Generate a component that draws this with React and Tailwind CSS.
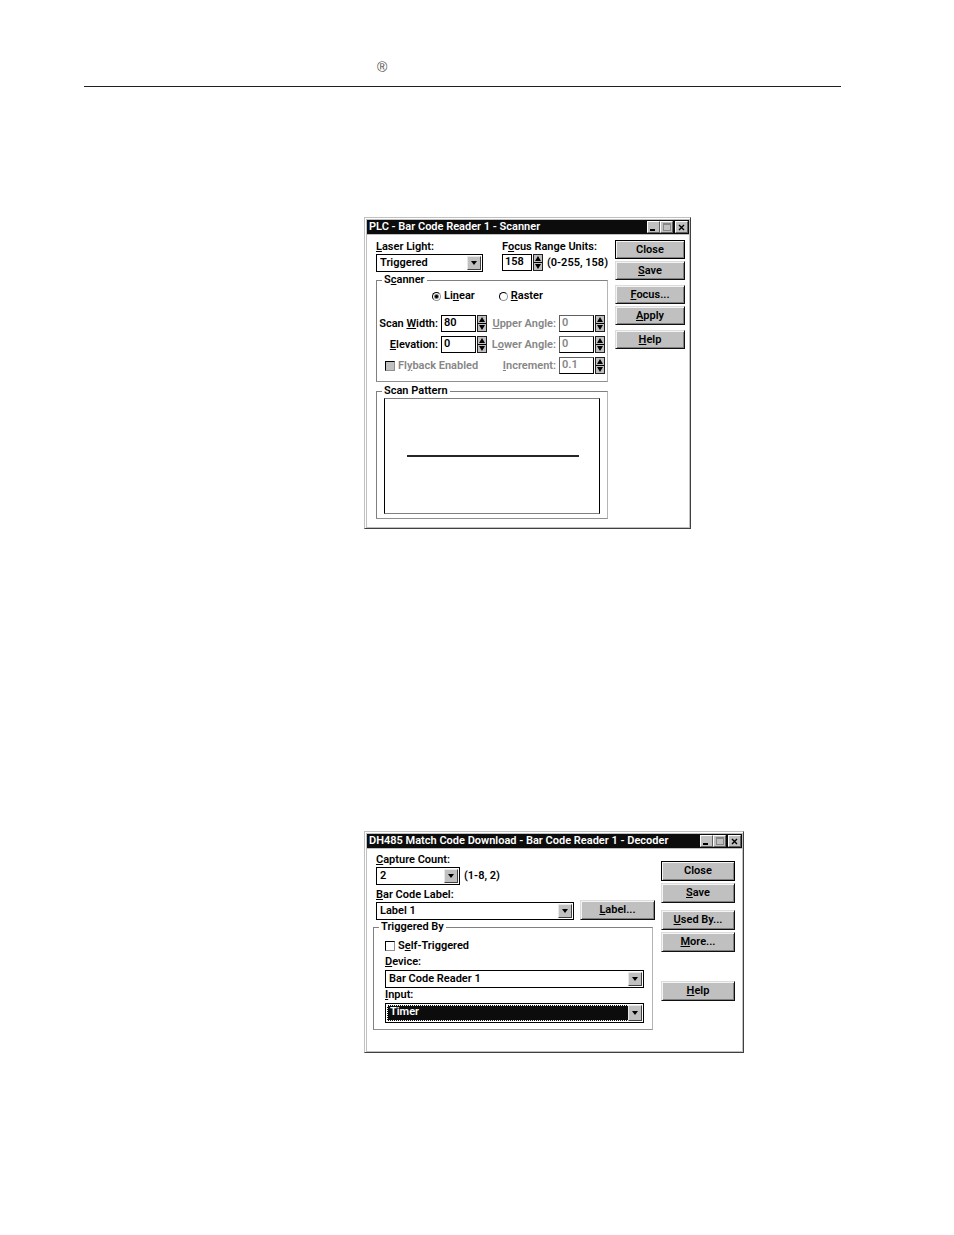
import React, { useId, useState } from "react";
import clsx from "clsx";

// Renders text with the character after "&" underlined as its access key.
function Mnemonic({ text }) {
  const i = text.indexOf("&");
  if (i < 0) return text;
  return (
    <>
      {text.slice(0, i)}
      <u className="underline underline-offset-1">{text[i + 1]}</u>
      {text.slice(i + 2)}
    </>
  );
}

function TitleButton({ label, dim, className, children }) {
  return (
    <button
      type="button"
      aria-label={label}
      className={clsx("flex h-3 w-[13px] items-center justify-center border border-t-white border-l-white border-r-[#606060] border-b-[#606060] bg-[#c0c0c0]", dim ? "text-[#868686]" : "text-black", className)}
    >
      <svg width="9" height="9" viewBox="0 0 9 9" fill="none" stroke="currentColor" shapeRendering="crispEdges">
        {children}
      </svg>
    </button>
  );
}

function Window({ title, className, children }) {
  return (
    <section aria-label={title} className={clsx("max-w-full border border-t-[#c0c0c0] border-l-[#c0c0c0] border-r-[#404040] border-b-[#404040] bg-white", className)}>
      <div className="h-full border-t border-l border-white">
        <div className="h-full border border-[#c0c0c0]">
          <header className="flex h-[15px] items-center border-b border-[#c0c0c0] bg-[#0c0c0c] pr-px pl-[2px] text-white">
            <h2 className="flex-1 whitespace-nowrap">{title}</h2>
            <TitleButton label="Minimize">
              <path d="M1 7h5" strokeWidth="2" />
            </TitleButton>
            <TitleButton label="Maximize" dim>
              <path d="M1.5 0.5h7v7h-7zM1 1.5h8" />
            </TitleButton>
            <TitleButton label="Close window" className="ml-[2px]">
              <path d="M2 2l5 5M7 2l-5 5" strokeWidth="1.4" shapeRendering="auto" />
            </TitleButton>
          </header>
          {children}
        </div>
      </div>
    </section>
  );
}

function PushButton({ text, primary, className }) {
  return (
    <button
      type="button"
      className={clsx(
        "border bg-[#c0c0c0] text-center shadow-[inset_1px_1px_0_#f4f4f4,inset_-1px_-1px_0_#808080]",
        primary ? "border-black" : "border-t-[#dcdcdc] border-l-[#dcdcdc] border-r-[#101010] border-b-[#101010]",
        className
      )}
    >
      <Mnemonic text={text} />
    </button>
  );
}

function Combo({ id, value, highlighted, className }) {
  return (
    <div className={clsx("relative border border-black p-px", className)}>
      <select
        id={id}
        defaultValue={value}
        className={clsx(
          "block h-full w-full appearance-none rounded-none pr-4 outline-none",
          highlighted ? "border border-dotted border-white bg-[#0c0c0c] pb-[2px] pl-[2px] text-white" : "bg-white pl-[2px]"
        )}
      >
        <option>{value}</option>
      </select>
      <span className="pointer-events-none absolute inset-y-px right-px flex w-[14px] items-center justify-center border border-t-[#e8e8e8] border-l-[#e8e8e8] border-r-[#404040] border-b-[#404040] bg-[#c0c0c0]">
        <svg width="6" height="4" viewBox="0 0 6 4" aria-hidden="true">
          <path d="M0 0h6L3 4z" />
        </svg>
      </span>
    </div>
  );
}

function SpinBox({ id, value, disabled, className }) {
  const [current, setCurrent] = useState(value);
  const step = (d) => setCurrent((v) => String(Number(v) + d));
  const arrow = "flex min-h-0 flex-1 items-center justify-center";
  return (
    <div className={clsx("flex h-[17px] gap-px", className)}>
      <input
        id={id}
        value={current}
        disabled={disabled}
        onChange={(e) => setCurrent(e.target.value)}
        className={clsx("w-0 min-w-0 flex-1 border border-black bg-white pb-[2px] pl-[2px] outline-none", disabled && "border-t-[#606060] border-l-[#606060] text-[#868686]")}
      />
      <div className="flex w-[10px] flex-col divide-y divide-black border border-[#202020] bg-[#c0c0c0]">
        <button type="button" aria-label="Increase" disabled={disabled} onClick={() => step(1)} className={arrow}>
          <svg width="6" height="5" viewBox="0 0 6 5"><path d="M3 0L6 5H0z" /></svg>
        </button>
        <button type="button" aria-label="Decrease" disabled={disabled} onClick={() => step(-1)} className={arrow}>
          <svg width="6" height="5" viewBox="0 0 6 5"><path d="M0 0h6L3 5z" /></svg>
        </button>
      </div>
    </div>
  );
}

function SpinField({ text, value, disabled }) {
  const id = useId();
  return (
    <>
      <label htmlFor={id} className={clsx("text-right whitespace-nowrap", disabled && "text-[#868686]")}>
        <Mnemonic text={text} />
      </label>
      <SpinBox id={id} value={value} disabled={disabled} />
    </>
  );
}

function Radio({ text, checked }) {
  return (
    <label className="flex items-center gap-[3px]">
      <input
        type="radio"
        name="mode"
        defaultChecked={checked}
        className="size-[9px] appearance-none rounded-full border border-t-black border-l-black border-r-[#909090] border-b-[#909090] checked:bg-[radial-gradient(circle,#000_1px,#fff_3px)]"
      />
      <span><Mnemonic text={text} /></span>
    </label>
  );
}

function Group({ title, className, children }) {
  return (
    <fieldset className="min-w-0 border border-t-[#808080] border-l-[#808080] border-r-[#b4b4b4] border-b-[#909090]">
      <legend className="ml-[5px] h-3 px-[2px]"><Mnemonic text={title} /></legend>
      <div className={className}>{children}</div>
    </fieldset>
  );
}

function ScannerWindow() {
  return (
    <Window title="PLC - Bar Code Reader 1 - Scanner" className="w-[327px]">
      <div className="flex pr-1 pb-2 pl-[9px]">
        <div className="flex min-w-0 flex-1 flex-col pt-[6px]">
          <div className="mb-[2px] flex justify-between">
            <div className="w-[107px]">
              <label htmlFor="laser" className="block"><Mnemonic text="&Laser Light:" /></label>
              <Combo id="laser" value="Triggered" className="mt-px h-[18px]" />
            </div>
            <div className="w-[106px]">
              <label htmlFor="focus" className="block whitespace-nowrap"><Mnemonic text="F&ocus Range Units:" /></label>
              <div className="mt-px flex items-center gap-1">
                <SpinBox id="focus" value="158" className="w-[41px]" />
                <span className="whitespace-nowrap">(0-255, 158)</span>
              </div>
            </div>
          </div>

          <Group title="S&canner" className="pt-1 pr-[2px] pb-[7px]">
            <div className="flex gap-6 pl-[55px]">
              <Radio text="Li&near" checked />
              <Radio text="&Raster" />
            </div>
            <div className="mt-[13px] grid grid-cols-[61px_46px_1fr_46px] items-center gap-x-[3px] gap-y-1">
              <SpinField text="Scan &Width:" value="80" />
              <SpinField text="&Upper Angle:" value="0" disabled />
              <SpinField text="&Elevation:" value="0" />
              <SpinField text="L&ower Angle:" value="0" disabled />
              <label className="col-span-2 flex items-center gap-[3px] pl-2 whitespace-nowrap text-[#868686]">
                <input type="checkbox" disabled className="size-[10px] appearance-none border border-t-black border-l-black border-r-[#909090] border-b-[#909090] bg-[#c0c0c0]" />
                <span><Mnemonic text="Fl&yback Enabled" /></span>
              </label>
              <SpinField text="&Increment:" value="0.1" disabled />
            </div>
          </Group>

          <div className="mt-[3px]">
            <Group title="Scan Pattern" className="px-[7px] pt-px pb-1">
              <div className="border border-x-black border-y-[#808080]">
                <svg viewBox="0 0 214 114" role="img" aria-label="Scan pattern" className="block h-[114px] w-full">
                  <path d="M22 57h172" stroke="#262626" strokeWidth="2" />
                </svg>
              </div>
            </Group>
          </div>
        </div>

        <div className="ml-[7px] flex w-[70px] flex-col pt-[5px]">
          <PushButton text="Close" primary className="h-[19px]" />
          <PushButton text="&Save" className="mt-[2px] h-[19px]" />
          <PushButton text="&Focus..." className="mt-[5px] h-[19px]" />
          <PushButton text="&Apply" className="mt-[2px] h-[19px]" />
          <PushButton text="&Help" className="mt-[5px] h-[19px]" />
        </div>
      </div>
    </Window>
  );
}

function DecoderWindow() {
  return (
    <Window title="DH485 Match Code Download - Bar Code Reader 1 - Decoder" className="w-[380px]">
      <div className="flex pr-[7px] pb-[21px] pl-[6px]">
        <div className="flex min-w-0 flex-1 flex-col pt-[5px]">
          <label htmlFor="count" className="ml-[3px]"><Mnemonic text="&Capture Count:" /></label>
          <div className="mt-px ml-[3px] flex items-center gap-1">
            <Combo id="count" value="2" className="h-[18px] w-[84px]" />
            <span>(1-8, 2)</span>
          </div>
          <div className="mt-1 ml-[3px] flex items-end gap-[6px]">
            <div className="flex-1">
              <label htmlFor="barcode" className="block"><Mnemonic text="&Bar Code Label:" /></label>
              <Combo id="barcode" value="Label 1" className="mt-px h-[18px]" />
            </div>
            <PushButton text="&Label..." className="h-5 w-[75px]" />
          </div>

          <div className="mt-px mr-[2px]">
            <Group title="Triggered By" className="px-[11px] pt-[7px] pb-[6px]">
              <label className="flex items-center gap-[3px]">
                <input type="checkbox" className="size-[10px] appearance-none border border-t-black border-l-black border-r-[#909090] border-b-[#909090] bg-white checked:bg-black" />
                <span><Mnemonic text="S&elf-Triggered" /></span>
              </label>
              <label htmlFor="device" className="mt-1 block"><Mnemonic text="&Device:" /></label>
              <Combo id="device" value="Bar Code Reader 1" className="mt-[2px] mr-[-3px] h-[18px]" />
              <label htmlFor="input" className="mt-px block"><Mnemonic text="&Input:" /></label>
              <Combo id="input" value="Timer" highlighted className="mt-[2px] mr-[-3px] h-5" />
            </Group>
          </div>
        </div>

        <div className="ml-[6px] flex w-[74px] flex-col pt-3">
          <PushButton text="Close" primary className="h-5" />
          <PushButton text="&Save" className="mt-[2px] h-5" />
          <PushButton text="&Used By..." className="mt-[7px] h-5" />
          <PushButton text="&More..." className="mt-[2px] h-5" />
          <PushButton text="&Help" className="mt-[29px] h-5" />
        </div>
      </div>
    </Window>
  );
}

export default function App() {
  return (
    <div className="min-h-screen bg-white pb-10 font-['Roboto',sans-serif] text-[11px] leading-3 font-semibold text-black">
      <header className="mr-[113px] ml-[84px] border-b border-[#202020] pt-[60px] pb-[12px] pl-[293px] font-['Liberation_Sans',sans-serif] text-[14px] leading-[14px] font-normal text-[#505050]">
        ®
      </header>
      <main className="mt-[130px] ml-[364px] flex flex-col gap-[302px]">
        <ScannerWindow />
        <DecoderWindow />
      </main>
    </div>
  );
}
